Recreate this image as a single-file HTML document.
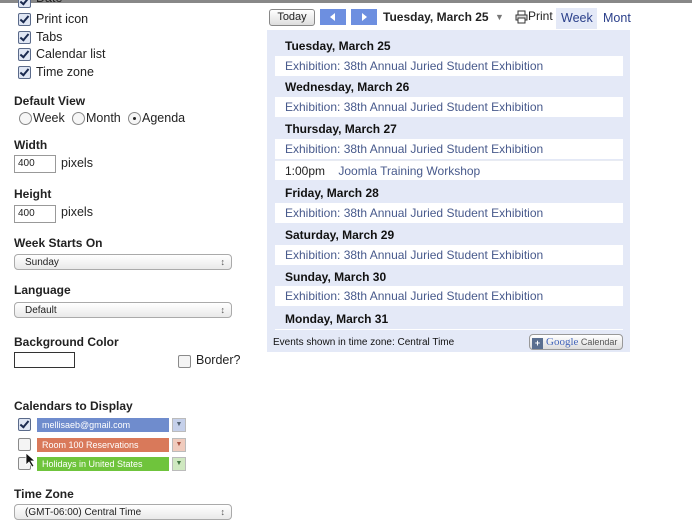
<!DOCTYPE html>
<html><head><style>
body{margin:0;width:692px;height:525px;background:#fff;font-family:"Liberation Sans",sans-serif;position:relative;overflow:hidden;color:#222}
.a{position:absolute;white-space:nowrap}
.cb{position:absolute;width:11px;height:11px;border:1px solid #8a8a8a;border-radius:2px;background:#f4f4f4}
.ck{position:absolute;width:11px;height:11px;border:1px solid #5a6a8a;border-radius:2px;background:#dfe6f4}
.ck:after{content:"";position:absolute;left:3px;top:0;width:3px;height:7px;border:solid #1a2a50;border-width:0 2px 2px 0;transform:rotate(40deg)}
.t{font-size:12.5px}
.h{font-size:12px;font-weight:bold}
.rd{position:absolute;width:11px;height:11px;border:1px solid #888;border-radius:50%;background:#f6f6f6}
.in{position:absolute;width:42px;border:1px solid #999;font-size:10px;line-height:16px;padding-left:3px;box-sizing:border-box;height:18px}
.sel{position:absolute;left:14px;width:218px;border:1px solid #aaa;border-radius:4px;background:linear-gradient(#fff,#e9e9e9);font-size:10px;line-height:15px;padding-left:10px;box-sizing:border-box;height:16px}
.sel:after{content:"\2195";position:absolute;right:6px;top:0;font-size:9px;color:#555}
.cal{position:absolute;left:267px;top:30px;width:363px;height:322px;background:#e4e9f7}
.dh{position:absolute;left:18px;font-size:12px;font-weight:bold;color:#111}
.ev{position:absolute;left:8px;width:348px;height:20px;background:#fff;font-size:12px;color:#485a8c;line-height:20px;padding-left:10px;box-sizing:border-box}
.cl{position:absolute;left:37px;width:132px;height:14px;color:#fff;font-size:9px;line-height:14px;padding-left:5px;box-sizing:border-box}
.dd{position:absolute;left:172px;width:12px;height:12px;border:1px solid #bbb;font-size:7px;text-align:center;line-height:12px}
.nav{position:absolute;top:9px;width:26px;height:16px;background:#6d8fe0}
</style></head><body>
<div class="a" style="left:0;top:0;width:692px;height:3px;background:#888"></div>
<div class="ck" style="left:18px;top:-5px"></div><div class="a t" style="left:36px;top:-9px">Date</div>
<div class="ck" style="left:18px;top:13px"></div><div class="a t" style="left:36px;top:12px">Print icon</div>
<div class="ck" style="left:18px;top:31px"></div><div class="a t" style="left:36px;top:30px">Tabs</div>
<div class="ck" style="left:18px;top:48px"></div><div class="a t" style="left:36px;top:47px">Calendar list</div>
<div class="ck" style="left:18px;top:66px"></div><div class="a t" style="left:36px;top:65px">Time zone</div>
<div class="a h" style="left:14px;top:94px">Default View</div>
<div class="rd" style="left:19px;top:112px"></div><div class="a t" style="left:33px;top:111px">Week</div>
<div class="rd" style="left:72px;top:112px"></div><div class="a t" style="left:86px;top:111px">Month</div>
<div class="rd" style="left:128px;top:112px"><div style="position:absolute;left:4px;top:4px;width:3px;height:3px;background:#222;border-radius:50%"></div></div><div class="a t" style="left:142px;top:111px">Agenda</div>
<div class="a h" style="left:14px;top:138px">Width</div>
<div class="in" style="left:14px;top:155px">400</div><div class="a t" style="left:61px;top:156px">pixels</div>
<div class="a h" style="left:14px;top:187px">Height</div>
<div class="in" style="left:14px;top:205px">400</div><div class="a t" style="left:61px;top:205px">pixels</div>
<div class="a h" style="left:14px;top:236px">Week Starts On</div>
<div class="sel" style="top:254px">Sunday</div>
<div class="a h" style="left:14px;top:283px">Language</div>
<div class="sel" style="top:302px">Default</div>
<div class="a h" style="left:14px;top:335px">Background Color</div>
<div class="a" style="left:14px;top:352px;width:59px;height:14px;border:1px solid #333"></div>
<div class="cb" style="left:178px;top:355px"></div><div class="a t" style="left:196px;top:353px">Border?</div>
<div class="a h" style="left:14px;top:399px">Calendars to Display</div>
<div class="ck" style="left:18px;top:418px"></div>
<div class="cl" style="left:37px;top:418px;background:#6f8ccd">mellisaeb@gmail.com</div><div class="dd" style="top:418px;background:#c5d0ea;color:#567">▼</div>
<div class="cb" style="left:18px;top:438px"></div>
<div class="cl" style="left:37px;top:438px;background:#d9795a">Room 100 Reservations</div><div class="dd" style="top:438px;background:#f0cbbd;color:#a54">▼</div>
<div class="cb" style="left:18px;top:457px"></div>
<div class="cl" style="left:37px;top:457px;background:#6fc43c">Holidays in United States</div><div class="dd" style="top:457px;background:#cfe8c0;color:#474">▼</div>
<svg class="a" style="left:25px;top:452px" width="12" height="16"><path d="M1 1 L1 13 L4 10 L7 15 L9 14 L6 9 L10 9 Z" fill="#111" stroke="#fff" stroke-width="0.8"/></svg>
<div class="a h" style="left:14px;top:487px">Time Zone</div>
<div class="sel" style="top:504px">(GMT-06:00) Central Time</div>

<div class="a" style="left:269px;top:9px;width:44px;height:15px;border:1px solid #888;border-radius:3px;background:linear-gradient(#fff,#ddd);font-size:11px;text-align:center;line-height:15px">Today</div>
<div class="nav" style="left:320px"><svg width="26" height="16"><path d="M15 4 L10 8 L15 12 Z" fill="#fff"/></svg></div>
<div class="nav" style="left:351px"><svg width="26" height="16"><path d="M11 4 L16 8 L11 12 Z" fill="#fff"/></svg></div>
<div class="a" style="left:383px;top:10px;font-size:12px;font-weight:bold">Tuesday, March 25</div>
<div class="a" style="left:495px;top:12px;font-size:9px;color:#777">▼</div>
<svg class="a" style="left:515px;top:10px" width="13" height="14"><rect x="3" y="1" width="7" height="4" fill="#fff" stroke="#333"/><rect x="1" y="5" width="11" height="5" fill="#ddd" stroke="#333"/><rect x="3" y="8" width="7" height="5" fill="#fff" stroke="#333"/></svg>
<div class="a" style="left:528px;top:9px;font-size:12px">Print</div>
<div class="a" style="left:556px;top:8px;width:41px;height:21px;background:#e4e9f7"></div>
<div class="a" style="left:561px;top:11px;font-size:12.5px;color:#2a3f8a">Week</div>
<div class="a" style="left:603px;top:11px;font-size:12.5px;color:#2a3f8a">Mont</div>
<div class="cal">
<div class="dh" style="top:9px">Tuesday, March 25</div>
<div class="ev" style="top:26px">Exhibition: 38th Annual Juried Student Exhibition</div>
<div class="dh" style="top:50px">Wednesday, March 26</div>
<div class="ev" style="top:67px">Exhibition: 38th Annual Juried Student Exhibition</div>
<div class="dh" style="top:92px">Thursday, March 27</div>
<div class="ev" style="top:109px">Exhibition: 38th Annual Juried Student Exhibition</div>
<div class="ev" style="top:130px;border-top:1px solid #e8ebf2"><span style="color:#222">1:00pm</span>&nbsp;&nbsp;&nbsp;&nbsp;Joomla Training Workshop</div>
<div class="dh" style="top:156px">Friday, March 28</div>
<div class="ev" style="top:173px">Exhibition: 38th Annual Juried Student Exhibition</div>
<div class="dh" style="top:198px">Saturday, March 29</div>
<div class="ev" style="top:215px">Exhibition: 38th Annual Juried Student Exhibition</div>
<div class="dh" style="top:240px">Sunday, March 30</div>
<div class="ev" style="top:256px">Exhibition: 38th Annual Juried Student Exhibition</div>
<div class="dh" style="top:282px">Monday, March 31</div>
<div class="a" style="left:8px;top:299px;width:348px;height:1px;background:#fff"></div>
<div class="a" style="left:6px;top:307px;font-size:10px;color:#111">Events shown in time zone: Central Time</div>
<div class="a" style="left:262px;top:304px;width:92px;height:14px;border:1px solid #999;border-radius:4px;background:linear-gradient(#fff,#ddd);font-size:9px;line-height:14px;color:#555"><span style="display:inline-block;width:11px;height:11px;background:#5a6f90;color:#fff;text-align:center;line-height:11px;margin:0 3px 0 2px;vertical-align:-1px;font-weight:bold">+</span><span style="color:#4466bb;font-family:'Liberation Serif',serif;font-size:11px">Google</span> Calendar</div>
</div>
</body></html>
